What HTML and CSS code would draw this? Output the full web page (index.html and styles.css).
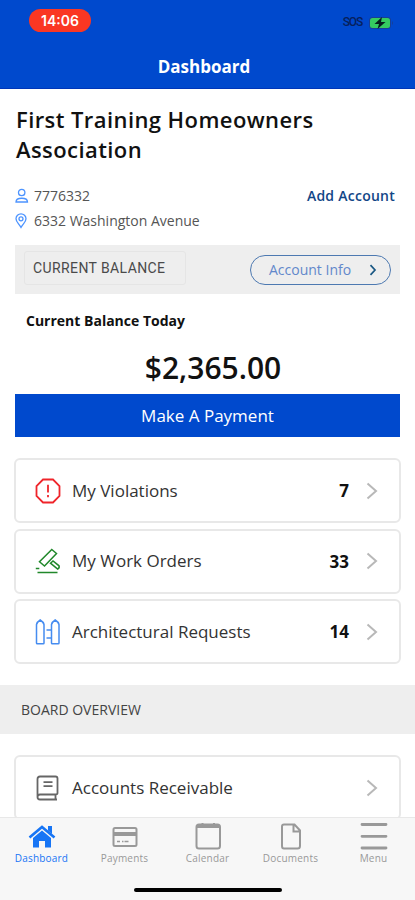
FILE: index.html
```html
<!DOCTYPE html>
<html lang="en">
<head>
	<meta charset="UTF-8">
	<title>Dashboard</title>
	<link rel="stylesheet" href="styles.css">
</head>
<body>
	<div class="app">
		<div class="header">
			<div class="status">
				<span class="time">14:06</span>
				<span class="sos">SOS</span>
				<svg class="battery" width="25" height="12" viewBox="0 0 25 12"><rect width="22" height="12" rx="3.5" fill="#173e96"/><rect x="1" y="1" width="20" height="10" rx="2.5" fill="#35cb60"/><path d="M23 4q2 2 0 4z" fill="#173e96"/><path d="M13 0L5.500 7h4.500L8.500 12L16.500 5h-4.500z" fill="#06201d"/></svg>
			</div>
			<h1>Dashboard</h1>
		</div>

		<div class="main">
			<h2>First Training Homeowners Association</h2>
			<div class="account">
				<ul>
					<li>
						<svg width="14" height="16" viewBox="0 0 14 16"><circle cx="6.700" cy="4.500" r="3.200"/><path d="M1 14c0-5 11.500-5 11.500 0z"/></svg>
						<span>7776332</span>
					</li>
					<li>
						<svg width="14" height="16" viewBox="0 0 14 16"><path d="M6 14.500C4 10.800 1 9 1 5.800a5 5 0 0 1 10 0C11 9 8 10.800 6 14.500z"/><circle cx="6" cy="5.800" r="2"/></svg>
						<span>6332 Washington Avenue</span>
					</li>
				</ul>
				<a href="#" class="add">Add Account</a>
			</div>

			<div class="bar">
				<span class="label">CURRENT BALANCE</span>
				<a href="#" class="info"><span>Account Info</span><svg width="8" height="12" viewBox="0 0 8 12"><path d="M1.500 1.200L6 6L1.500 10.800"/></svg></a>
			</div>
			<div class="today">Current Balance Today</div>
			<div class="amount">$2,365.00</div>
			<a href="#" class="pay">Make A Payment</a>

			<ul class="cards">
				<li>
					<svg class="icon red" width="26" height="26" viewBox="0 0 26 26"><path d="M8 1.500h10L24.500 8v10L18 24.500H8L1.500 18V8z"/><path d="M13 6.800v7.700M13 17v2.200"/></svg>
					<span class="name">My Violations</span><b>7</b>
					<svg class="arrow" width="12" height="18" viewBox="0 0 12 18"><path d="M1.500 1.500L10 9L1.500 16.500"/></svg>
				</li>
				<li>
					<svg class="icon green" width="26" height="26" viewBox="0 0 26 26"><path d="M16.800 1.500L21.500 5.500L9.500 18L4.500 13.800z"/><path d="M15.500 15.200L18 13l6 4.800q.8 2.200-1.300 3.200z"/><path d="M2.500 24.500h20M.8 20.500h3.500"/></svg>
					<span class="name">My Work Orders</span><b>33</b>
					<svg class="arrow" width="12" height="18" viewBox="0 0 12 18"><path d="M1.500 1.500L10 9L1.500 16.500"/></svg>
				</li>
				<li>
					<svg class="icon blue" width="26" height="26" viewBox="0 0 26 26"><path d="M1.500 24V5.500Q2 3 5.200 1Q8.500 3 9 5.500V24q0 .8-.8.800H2.300q-.8 0-.8-.8zM16.500 24V5.500Q17 3 20.200 1Q23.500 3 24 5.500V24q0 .8-.8.800h-5.900q-.8 0-.8-.8z"/><path d="M11.500 11h5M11.500 19h5"/></svg>
					<span class="name">Architectural Requests</span><b>14</b>
					<svg class="arrow" width="12" height="18" viewBox="0 0 12 18"><path d="M1.500 1.500L10 9L1.500 16.500"/></svg>
				</li>
			</ul>

			<div class="overview">BOARD OVERVIEW</div>
			<ul class="cards">
				<li>
					<svg class="icon grey" width="26" height="26" viewBox="0 0 26 26"><path d="M2.500 21.500V4q0-2.500 2.500-2.500h15.500q2 0 2 2V18q0 1.500-2 1.500H5Q2.500 19.500 2.500 22T5 24.500h17M20.500 19.500v5M8.500 7.200h9M8.500 11.200h9"/></svg>
					<span class="name">Accounts Receivable</span>
					<svg class="arrow" width="12" height="18" viewBox="0 0 12 18"><path d="M1.500 1.500L10 9L1.500 16.500"/></svg>
				</li>
			</ul>
		</div>

		<div class="footer">
			<div class="tabs">
				<a href="#" class="current">
					<svg width="28" height="28" viewBox="0 0 28 28"><path class="fill" d="M5 16L14 8.500l9 7.500v9.500h-6V19h-6v6.500H5z"/><path d="M1.500 15.500L14 5l12.500 10.500" stroke-width="2.600"/><path class="fill" d="M20 4h4v8l-4-3.500z"/></svg>
					<span>Dashboard</span>
				</a>
				<a href="#">
					<svg width="28" height="28" viewBox="0 0 28 28"><rect x="2.500" y="6" width="23" height="18" rx="1.500"/><path class="fill" d="M3 10h22v4H3z"/><path d="M6 19.500h3M11 19.500h1.500M13.500 19.500h4" stroke-width="1.600"/></svg>
					<span>Payments</span>
				</a>
				<a href="#">
					<svg width="28" height="28" viewBox="0 0 28 28"><rect x="2.500" y="2.500" width="23.500" height="24" rx="2.500"/><path class="fill" d="M3 3h23v3H3z"/><path d="M8.500 1v3M20 1v3"/></svg>
					<span>Calendar</span>
				</a>
				<a href="#">
					<svg width="28" height="28" viewBox="0 0 28 28"><path d="M7 2.500h10.500l5.500 6V24q0 2.500-2.500 2.500H7Q5 26.500 5 24V4.500q0-2 2-2zM16.500 2.500v7h6.500"/></svg>
					<span>Documents</span>
				</a>
				<a href="#">
					<svg width="28" height="28" viewBox="0 0 28 28"><path d="M2 2.500h24M2 14.300h24M2 26h24" stroke-width="2.800" stroke-linecap="round"/></svg>
					<span>Menu</span>
				</a>
			</div>
			<div class="home"></div>
		</div>
	</div>
</body>
</html>
```

FILE: styles.css
```css
*{padding:0;margin:0;box-sizing:border-box;}
ul,li{list-style:none;}
a{text-decoration:none;color:inherit;}
svg{display:block;flex:none;fill:none;stroke:currentColor;}
body{font-family:"Open Sans","Noto Sans",sans-serif;color:#111;background:#fff;}
.app{height:900px;display:flex;flex-direction:column;overflow:hidden;white-space:nowrap;}

/* top bar */
.header{height:89px;flex:none;background:#0049cd;border-bottom:1px solid #0036b8;color:#fff;}
.status{display:flex;align-items:center;height:45px;padding:8px 21px 13px 29px;}
.time{width:62px;height:23px;border-radius:12px;background:#fa3723;font:600 14px/23px Inter,sans-serif;text-align:center;}
.sos{margin-left:auto;margin-right:7px;padding-top:4px;font:500 12px/12px Roboto,sans-serif;letter-spacing:-1.2px;color:#071f5c;}
.battery{margin-top:5px;stroke:none;}
h1{font-size:17px;line-height:24px;font-weight:700;text-align:center;margin:10px 7px 0 0;}

/* account */
.main{flex:1;min-height:0;overflow:hidden;}
h2{font-size:22px;line-height:30px;font-weight:600;letter-spacing:.42px;white-space:normal;margin:15px 16px 0;}
.account{display:flex;justify-content:space-between;padding:19px 20px 0 15px;}
.account li{display:flex;align-items:center;height:25px;font-size:14px;color:#555;}
.account svg{color:#4d94ff;margin-right:5px;stroke-width:1.300;}
.add{font-size:14px;line-height:25px;font-weight:600;letter-spacing:.25px;color:#124687;}

.bar{height:49px;margin:12px 15px 0;padding:0 9px;display:flex;align-items:center;justify-content:space-between;background:#eee;}
.label{width:162px;height:34px;margin-top:-4px;border:1px solid #e5e5e5;border-radius:3px;font:14px/33px Roboto,sans-serif;letter-spacing:.4px;padding-left:8px;color:#4a4a4a;}
.info{width:141px;height:30px;border:1px solid #4d79b1;border-radius:15px;display:flex;align-items:center;justify-content:space-between;padding:0 13px 0 18px;font-size:14px;color:#6288cb;}
.info svg{color:#195783;stroke-width:1.700;}
.today{font-size:14px;line-height:20px;font-weight:700;margin:17px 26px 0;}
.amount{font-size:30px;line-height:38px;font-weight:600;text-align:center;margin:18px 0 7px 11px;}
.pay{display:block;height:43px;line-height:44px;margin:0 15px;background:#0049cd;color:#fff;font-size:17px;text-align:center;}

/* rows */
.cards{margin:21px 14px 0;display:flex;flex-direction:column;gap:5.500px;}
.cards li{height:65px;border:2px solid #e8e8e8;border-radius:6px;display:flex;align-items:center;padding:0 21px 0 19px;}
.name{font-size:17px;line-height:24px;color:#333;margin-left:11px;}
.cards b{font-size:17px;font-weight:700;margin-left:auto;margin-right:17px;}
.arrow{color:#b8b8b8;stroke-width:2;margin-left:auto;}
b + .arrow{margin-left:0;}
.icon{stroke-width:1.500;}
.red{color:#ef252b;stroke-width:1.800;}
.green{color:#21882b;}
.blue{color:#468cf0;}
.grey{color:#666;stroke-width:1.800;}
.overview{height:49px;line-height:50px;margin-top:21px;padding-left:21px;background:#eee;font-size:14px;color:#444;}

/* bottom tabs */
.footer{height:83px;flex:none;background:#f7f7f7;border-top:1px solid #e8e8e8;}
.tabs{display:flex;height:70px;padding-top:4px;}
.tabs a{flex:1;display:flex;flex-direction:column;align-items:center;color:#999;font-size:10px;line-height:14px;}
.tabs svg{stroke-width:2;}
.tabs span{margin-top:1px;letter-spacing:.2px;}
.tabs .fill{fill:currentColor;stroke:none;}
.tabs .current{color:#1775f5;}
.home{width:148px;height:4px;margin:0 auto;border-radius:2px;background:#000;}
```
